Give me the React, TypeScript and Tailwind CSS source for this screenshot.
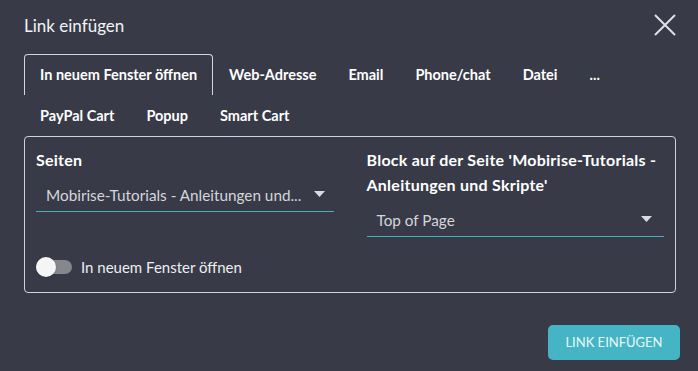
import React from "react";

const Caret = () => (
  <svg width="11" height="6" viewBox="0 0 11 6" className="shrink-0">
    <path d="M0 0 L11 0 L5.5 6 Z" fill="#d9dbe0" />
  </svg>
);

export default function App() {
  const tabs1 = ["In neuem Fenster öffnen", "Web-Adresse", "Email", "Phone/chat", "Datei", "..."];
  const tabs2 = ["PayPal Cart", "Popup", "Smart Cart"];
  return (
    <div
      className="w-[698px] h-[371px] bg-[#383b47] text-white pl-6 pr-[18px] flex flex-col"
      style={{ fontFamily: "Lato, 'Noto Sans', sans-serif" }}
    >
      <div className="flex items-center justify-between h-[50px] pt-px">
        <div className="text-[17px] text-[#f2f3f5]">Link einfügen</div>
        <svg width="24" height="24" viewBox="0 0 24 24" className="mr-[3px] mb-[2px]">
          <path d="M2 2 L22 22 M22 2 L2 22" stroke="#dfe1e6" strokeWidth="2" />
        </svg>
      </div>
      <div className="pr-[4px] flex flex-col">
        <div className="flex flex-wrap mt-[4px]">
          {tabs1.map((t, i) => (
            <div
              key={t}
              className={
                "h-[41px] px-[15px] flex items-center text-[14.5px] font-bold border border-b-0 rounded-t-[4px] " +
                (i === 0 ? "border-[#d3d6dc]" : "border-transparent")
              }
            >
              {t}
            </div>
          ))}
        </div>
        <div className="flex">
          {tabs2.map((t) => (
            <div key={t} className="h-[41px] px-[16px] flex items-center text-[14.5px] font-bold">
              {t}
            </div>
          ))}
        </div>
        <div className="border border-[#cfd2d8] rounded-[4px] px-[11px] pt-[10px] pb-[15px]">
          <div className="grid grid-cols-2 gap-x-[33px]">
            <div className="flex flex-col">
              <div className="text-[16px] tracking-[0.25px] font-bold leading-[25px]">Seiten</div>
              <div className="h-10 border-b border-[#47aebd] flex items-start pt-[13px] pl-[10px] pr-[9px] justify-between">
                <span className="text-[15.3px] leading-5 text-[#d4d6db]">Mobirise-Tutorials - Anleitungen und...</span>
                <div className="mt-[6px]"><Caret /></div>
              </div>
            </div>
            <div className="flex flex-col">
              <div className="text-[16px] tracking-[0.25px] font-bold leading-[25px]">
                Block auf der Seite 'Mobirise-Tutorials - Anleitungen und Skripte'
              </div>
              <div className="h-10 border-b border-[#47aebd] flex items-start pt-[13px] pl-[10px] pr-[12px] justify-between">
                <span className="text-[15.3px] leading-5 text-[#d4d6db]">Top of Page</span>
                <div className="mt-[6px]"><Caret /></div>
              </div>
            </div>
          </div>
          <div className="flex items-center mt-[20px] h-5">
            <div className="relative w-[36px] h-[14px] rounded-full bg-[#85878d]">
              <div className="absolute left-0 top-1/2 -translate-y-1/2 w-5 h-5 rounded-full bg-[#f5f5f5] shadow" />
            </div>
            <span className="ml-[9px] text-[15px] text-[#eceef1]">In neuem Fenster öffnen</span>
          </div>
        </div>
      </div>
      <div className="flex justify-end mt-[32px]">
        <div className="w-[132px] h-[35px] rounded-[5px] bg-[#45b4c4] flex items-center justify-center text-[13px] text-[#eaf8fa]">
          LINK EINFÜGEN
        </div>
      </div>
    </div>
  );
}
